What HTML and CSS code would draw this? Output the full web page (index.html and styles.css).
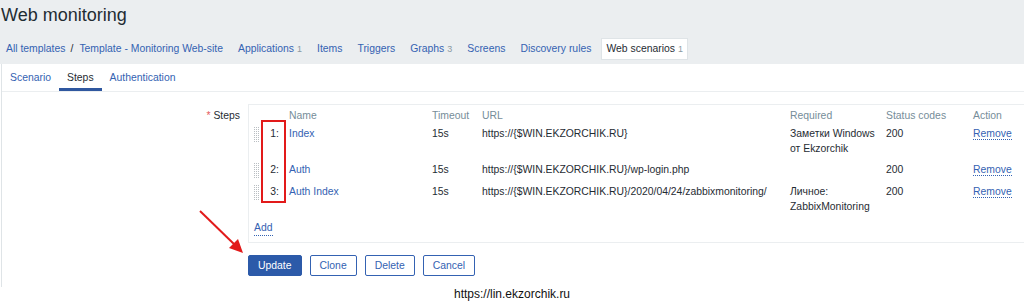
FILE: index.html
```html
<!DOCTYPE html>
<html>
  <head>
    <meta charset="UTF-8">
    <title>Web monitoring</title>
    <link rel="stylesheet" href="styles.css">
  </head>
  <body>
    <header class="page-header">
      <h1>Web monitoring</h1>
    </header>

    <nav class="host-nav">
      <ul>
        <li class="crumbs"><a href="#">All templates</a><span class="slash">/</span><a href="#">Template - Monitoring Web-site</a></li>
        <li><a href="#">Applications</a><sup>1</sup></li>
        <li><a href="#">Items</a></li>
        <li><a href="#">Triggers</a></li>
        <li><a href="#">Graphs</a><sup>3</sup></li>
        <li><a href="#">Screens</a></li>
        <li><a href="#">Discovery rules</a></li>
        <li class="selected"><a href="#">Web scenarios</a><sup>1</sup></li>
      </ul>
    </nav>

    <div class="form-container">
      <ul class="tabs">
        <li><a href="#">Scenario</a></li>
        <li class="active"><a href="#">Steps</a></li>
        <li><a href="#">Authentication</a></li>
      </ul>

      <form class="form-grid">
        <label class="form-label"><span class="asterisk">*</span> Steps</label>
        <div class="steps-box">
          <table class="steps">
            <colgroup>
              <col style="width: 13px">
              <col style="width: 27px">
              <col style="width: 143px">
              <col style="width: 50px">
              <col style="width: 308px">
              <col style="width: 96px">
              <col style="width: 87px">
              <col style="width: 60px">
            </colgroup>
            <thead>
              <tr>
                <th></th>
                <th></th>
                <th>Name</th>
                <th>Timeout</th>
                <th>URL</th>
                <th>Required</th>
                <th>Status codes</th>
                <th>Action</th>
              </tr>
            </thead>
            <tbody>
              <tr>
                <td><span class="drag"></span></td>
                <td class="num">1:</td>
                <td><a href="#">Index</a></td>
                <td>15s</td>
                <td>https://{$WIN.EKZORCHIK.RU}</td>
                <td>Заметки Windows от Ekzorchik</td>
                <td>200</td>
                <td><a href="#" class="action">Remove</a></td>
              </tr>
              <tr>
                <td><span class="drag"></span></td>
                <td class="num">2:</td>
                <td><a href="#">Auth</a></td>
                <td>15s</td>
                <td>https://{$WIN.EKZORCHIK.RU}/wp-login.php</td>
                <td></td>
                <td>200</td>
                <td><a href="#" class="action">Remove</a></td>
              </tr>
              <tr>
                <td><span class="drag"></span></td>
                <td class="num">3:</td>
                <td><a href="#">Auth Index</a></td>
                <td>15s</td>
                <td>https://{$WIN.EKZORCHIK.RU}/2020/04/24/zabbixmonitoring/</td>
                <td>Личное: ZabbixMonitoring</td>
                <td>200</td>
                <td><a href="#" class="action">Remove</a></td>
              </tr>
            </tbody>
          </table>
          <a href="#" class="action add">Add</a>
        </div>

        <div class="form-actions">
          <button type="button" class="btn-main">Update</button>
          <button type="button">Clone</button>
          <button type="button">Delete</button>
          <button type="button">Cancel</button>
        </div>
      </form>
    </div>

    <div class="watermark">https://lin.ekzorchik.ru</div>

    <!-- red marks drawn over the screenshot -->
    <div class="mark-box"></div>
    <svg class="mark-arrow" width="60" height="60" viewBox="0 0 60 60">
      <line x1="2" y1="2" x2="38" y2="37" stroke="#e21a1a" stroke-width="2"/>
      <polygon points="45,44 31,39 40,30" fill="#e21a1a"/>
    </svg>
  </body>
</html>
```

FILE: styles.css
```css
body {
  background-color: #fff;
  color: #1f2c33;
  font-family: "Liberation Sans", Arial, sans-serif;
  font-size: 10.4px;
  line-height: 15px;
  margin: 0;
  padding: 0;
  position: relative;
  height: 302px;
  overflow: hidden;
}

a {
  color: #3462b2;
  text-decoration: none;
}

.page-header {
  background-color: #ebeef0;
  height: 30px;
}

.page-header h1 {
  font-size: 18px;
  font-weight: normal;
  line-height: 30px;
  margin: 0;
  padding-left: 1px;
}

.host-nav {
  background-color: #ebeef0;
  height: 34px;
  padding-top: 8px;
  box-sizing: border-box;
}

.host-nav ul {
  display: flex;
  gap: 5px;
  list-style: none;
  margin: 0;
  padding: 0 0 0 1px;
}

.host-nav li {
  border: 1px solid transparent;
  height: 20px;
  line-height: 20px;
  padding: 0 4px;
}

.host-nav li.selected {
  background-color: #fff;
  border-color: #dfe4e7;
}

.host-nav li.selected a {
  color: #1f2c33;
}

.host-nav sup {
  color: #8b9aa3;
  font-size: 9px;
  vertical-align: baseline;
  margin-left: 3px;
}

.crumbs .slash {
  color: #1f2c33;
  margin: 0 6px 0 5px;
}

.form-container {
  border-left: 1px solid #dfe4e7;
  height: 223px;
  margin-left: 1px;
}

.tabs {
  border-bottom: 1px solid #ebeef0;
  display: flex;
  list-style: none;
  margin: 0;
  padding: 0;
}

.tabs li {
  border-bottom: 3px solid transparent;
  padding: 6px 8px 3px;
}

.tabs li.active {
  border-bottom-color: #2f579f;
}

.tabs li.active a {
  color: #1f2c33;
}

.form-grid {
  display: grid;
  grid-template-columns: 238px auto;
  column-gap: 8px;
  padding-top: 12px;
}

.form-label {
  padding-top: 4px;
  text-align: right;
}

.asterisk {
  color: #e45959;
}

.steps-box {
  border: 1px solid #ebeef0;
  box-sizing: border-box;
  padding-bottom: 6px;
  width: 790px;
}

.steps {
  border-collapse: collapse;
  table-layout: fixed;
  width: 784px;
}

.steps th {
  color: #768d99;
  font-weight: normal;
  padding: 3px 0 0;
  text-align: left;
}

.steps td {
  padding: 3px 0;
  vertical-align: top;
}

.steps td.num {
  padding-right: 10px;
  text-align: right;
}

.drag {
  background-color: #b9bec2;
  background-image: linear-gradient(#fff 1px, transparent 1px), linear-gradient(90deg, #fff 1px, transparent 1px);
  background-size: 2px 2px;
  display: block;
  height: 16px;
  margin: 0 0 0 4px;
  width: 6px;
}

.action {
  border-bottom: 1px dotted #3462b2;
}

.add {
  display: inline-block;
  line-height: 14px;
  margin: 4px 0 0 5px;
}

.form-actions {
  display: flex;
  gap: 8px;
  grid-column: 2;
  margin-top: 12px;
}

button {
  background-color: #fff;
  border: 1px solid #3462b2;
  border-radius: 2px;
  color: #3462b2;
  cursor: pointer;
  font-family: inherit;
  font-size: 10.4px;
  height: 21px;
  padding: 0 9px;
}

button.btn-main {
  background-color: #2c5aa9;
  border-color: #2c5aa9;
  color: #fff;
}

.watermark {
  color: #111;
  font-size: 12px;
  left: 454px;
  position: absolute;
  top: 287px;
}

.mark-box {
  border: 2px solid #e21a1a;
  height: 79px;
  left: 261px;
  position: absolute;
  top: 120px;
  width: 21px;
}

.mark-arrow {
  left: 198px;
  position: absolute;
  top: 209px;
}
```
